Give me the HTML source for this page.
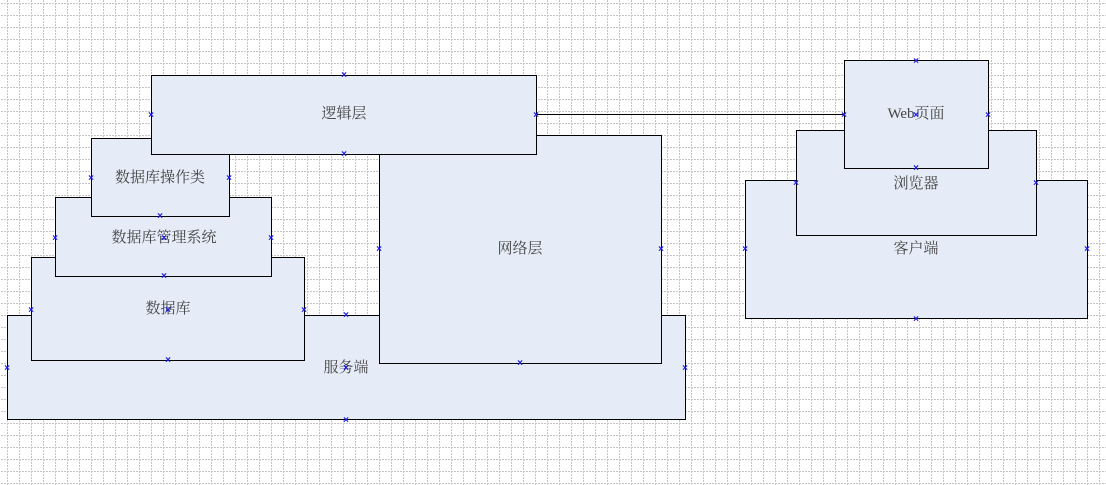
<!DOCTYPE html>
<html><head><meta charset="utf-8"><style>
html,body{margin:0;padding:0;background:#fff;width:1106px;height:485px;overflow:hidden}
svg text.l{font-family:"Liberation Serif","Noto Serif CJK SC","Noto Sans CJK SC",serif;font-size:15px;fill:#444;text-anchor:middle}
svg text.x{font-family:"Liberation Sans",sans-serif;font-size:10px;fill:#1a1aee;text-anchor:middle;font-weight:bold}
</style></head><body>
<svg width="1106" height="485" xmlns="http://www.w3.org/2000/svg">
<defs>
<pattern id="g" x="7" y="3" width="12" height="12" patternUnits="userSpaceOnUse">
<line x1="0.5" y1="0" x2="0.5" y2="12" stroke="#c4c4c4" stroke-dasharray="2,1"/>
<line x1="0" y1="0.5" x2="12" y2="0.5" stroke="#c4c4c4" stroke-dasharray="2,1"/>
</pattern>
</defs>
<rect width="1106" height="485" fill="url(#g)"/>
<g fill="#e5ecf7" stroke="#000" stroke-width="1">
<rect x="7.5" y="315.5" width="678" height="104"/>
<rect x="379.5" y="135.5" width="282" height="228"/>
<rect x="31.5" y="257.5" width="273" height="103"/>
<rect x="55.5" y="197.5" width="216" height="79"/>
<rect x="91.5" y="138.5" width="138" height="78"/>
<rect x="151.5" y="75.5" width="385" height="79"/>
<rect x="745.5" y="180.5" width="342" height="138"/>
<rect x="796.5" y="130.5" width="240" height="105"/>
<rect x="844.5" y="60.5" width="144" height="108"/>
</g>
<line x1="536" y1="114.5" x2="844" y2="114.5" stroke="#000"/>
<text class="l" x="344" y="118">逻辑层</text>
<text class="l" x="160" y="182">数据库操作类</text>
<text class="l" x="164" y="242">数据库管理系统</text>
<text class="l" x="168" y="313">数据库</text>
<text class="l" x="346" y="372">服务端</text>
<text class="l" x="520" y="253">网络层</text>
<text class="l" x="916" y="118">Web页面</text>
<text class="l" x="916" y="188">浏览器</text>
<text class="l" x="916" y="253">客户端</text>
<g>
<text class="x" x="344" y="78">×</text><text class="x" x="344" y="157">×</text><text class="x" x="151" y="118">×</text><text class="x" x="536" y="118">×</text>
<text class="x" x="91" y="181">×</text><text class="x" x="229" y="181">×</text><text class="x" x="160" y="219">×</text>
<text class="x" x="55" y="241">×</text><text class="x" x="271" y="241">×</text><text class="x" x="164" y="279">×</text><text class="x" x="164" y="241">×</text>
<text class="x" x="31" y="313">×</text><text class="x" x="304" y="313">×</text><text class="x" x="168" y="363">×</text><text class="x" x="168" y="313">×</text>
<text class="x" x="7" y="371">×</text><text class="x" x="685" y="371">×</text><text class="x" x="346" y="423">×</text><text class="x" x="346" y="318">×</text><text class="x" x="346" y="371">×</text>
<text class="x" x="379" y="252">×</text><text class="x" x="661" y="252">×</text><text class="x" x="520" y="366">×</text>
<text class="x" x="916" y="64">×</text><text class="x" x="844" y="118">×</text><text class="x" x="988" y="118">×</text><text class="x" x="916" y="171">×</text><text class="x" x="916" y="118">×</text>
<text class="x" x="796" y="186">×</text><text class="x" x="1036" y="186">×</text><text class="x" x="745" y="252">×</text><text class="x" x="1087" y="252">×</text><text class="x" x="916" y="322">×</text>
</g>
</svg>
</body></html>
